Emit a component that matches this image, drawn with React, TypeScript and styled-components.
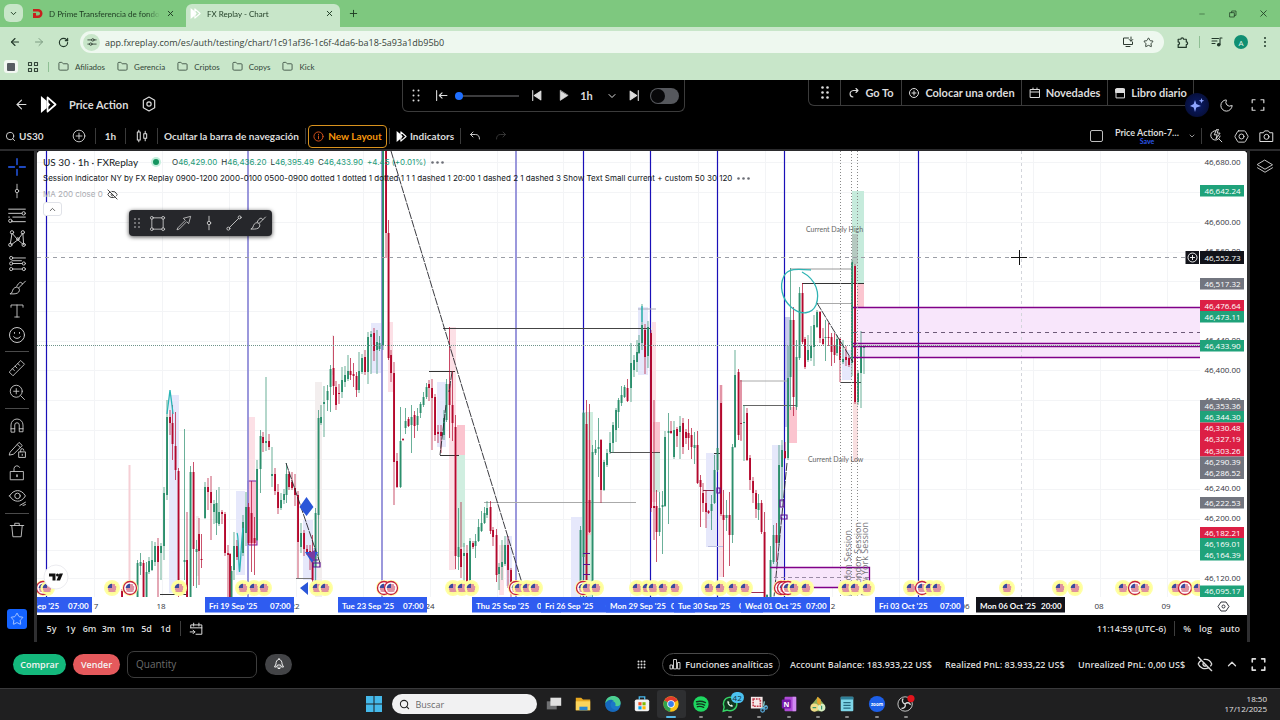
import React from "react";
import styled, { createGlobalStyle } from "styled-components";
import {
  ArrowLeft, ArrowRight, RotateCw, Search, Plus, X, Star, Moon, Folder,
  ChevronDown, ChevronUp, EyeOff, Minus,
} from "lucide-react";

const uiFont = `"Open Sans", "Noto Sans", sans-serif`;
const appFont = `Lato, "Open Sans", sans-serif`;
const legendFont = `Inter, "Open Sans", sans-serif`;

const GlobalStyle = createGlobalStyle`
  * { box-sizing: border-box; }
  body { margin: 0; background: #000; font-family: ${appFont}; }
  button { border: 0; background: none; padding: 0; margin: 0; color: inherit; font: inherit; cursor: pointer; }
  a { color: inherit; text-decoration: none; }
  svg { display: block; flex: none; }
`;

const Page = styled.div`
  display: flex;
  flex-direction: column;
  min-height: 100vh;
  color: #dcdcdc;
  font-size: 11px;
`;

/* ---------- browser ---------- */
const TabStrip = styled.div`
  display: flex;
  align-items: flex-end;
  height: 27px;
  background: #7ec87f;
  color: #1d3a22;
  font: 8px ${appFont};
`;
const TabMenu = styled.button`
  display: grid;
  place-items: center;
  width: 19px;
  height: 18px;
  margin: 0 5px 5px 4px;
  border-radius: 6px;
  background: #c8e6c9;
`;
const Tab = styled.div<{ $active?: boolean }>`
  display: flex;
  align-items: center;
  width: ${(p) => (p.$active ? 154 : 158)}px;
  height: 23px;
  padding: 0 ${(p) => (p.$active ? 6 : 11)}px 4px 4px;
  gap: 6px;
  border-radius: 6px 6px 0 0;
  background: ${(p) => (p.$active ? "#c8e6c9" : "transparent")};
`;
const TabTitle = styled.span`
  flex: 1;
  overflow: hidden;
  white-space: nowrap;
  mask-image: linear-gradient(90deg, #000 88%, transparent);
`;
const StripButton = styled.button`
  display: grid;
  place-items: center;
  width: 27px;
  height: 27px;
`;
const WindowControls = styled.div`
  display: flex;
  gap: 4px;
  margin-left: auto;
  padding-right: 3px;
`;
const BrowserBar = styled.div`
  display: flex;
  align-items: center;
  height: 29px;
  padding: 1px 3px 0 3px;
  background: #c8e6c9;
  color: #22382a;
`;
const BarButton = styled.button`
  display: grid;
  place-items: center;
  width: 24px;
  height: 22px;
`;
const BarDivider = styled.i`
  width: 1px;
  height: 12px;
  margin: 0 5px;
  background: #8fbf94;
`;
const Address = styled.label`
  display: flex;
  flex: 1;
  align-items: center;
  height: 22px;
  margin: 0 6px 0 5px;
  padding: 0 10px 0 3px;
  border-radius: 11px;
  background: #eef8ef;
  color: #2d3a30;
`;
const AddressInput = styled.input`
  flex: 1;
  margin: 0 4px 0 5px;
  padding: 0;
  border: 0;
  outline: 0;
  background: none;
  color: #37433a;
  font: 9px ${uiFont};
`;
const SiteChip = styled.span`
  display: grid;
  place-items: center;
  width: 17px;
  height: 17px;
  border-radius: 50%;
  background: #c8e6c9;
`;
const AddressIcon = styled.span`
  margin-left: 9px;
`;
const Avatar = styled.span`
  display: grid;
  place-items: center;
  width: 14px;
  height: 14px;
  margin: 0 5px;
  border-radius: 50%;
  background: #0f8f72;
  color: #e8f5e9;
  font: 8px ${uiFont};
`;
const Bookmarks = styled.nav`
  display: flex;
  align-items: center;
  height: 24px;
  padding: 0 4px 3px;
  gap: 9px;
  background: #c8e6c9;
  color: #34463a;
  font: 8px ${appFont};
`;
const Bookmark = styled.a`
  display: flex;
  align-items: center;
  gap: 6px;
  margin-right: 3px;
`;
const Pip = styled.i<{ $c: string; $h?: number }>`
  width: 1px;
  height: ${(p) => p.$h ?? 12}px;
  background: ${(p) => p.$c};
`;
const PinnedTile = styled.span`
  display: grid;
  place-items: center;
  width: 14px;
  height: 13px;
  border-radius: 3px;
  background: #f2f7f2;
`;

/* ---------- app header ---------- */
const Header = styled.header`
  display: flex;
  align-items: flex-start;
  height: 44px;
  padding-right: 10px;
`;
const HeaderLeft = styled.div`
  display: flex;
  align-items: center;
  width: 402px;
  height: 48px;
  padding-left: 14px;
`;
const BackButton = styled.button`
  width: 14px;
  margin-right: 12px;
`;
const HeaderTitle = styled.h1`
  width: 67px;
  margin: 0 5px 0 12px;
  font: 700 11px ${appFont};
  white-space: nowrap;
`;
const Dock = styled.div<{ $h: number }>`
  display: flex;
  align-items: center;
  height: ${(p) => p.$h}px;
  border: 1px solid #3b3b3b;
  border-top: 0;
  border-radius: 0 0 6px 6px;
`;
const DockCell = styled.button<{ $w: number; $line?: boolean }>`
  display: flex;
  align-items: center;
  justify-content: center;
  gap: 5px;
  width: ${(p) => p.$w}px;
  height: 100%;
  border-left: ${(p) => (p.$line ? "1px solid #3b3b3b" : "0")};
  font: 700 11px ${appFont};
  white-space: nowrap;
`;
const SpeedSlider = styled.input`
  appearance: none;
  width: 64px;
  height: 16px;
  margin: 0 4px 0 2px;
  background: linear-gradient(#3c3c3e, #3c3c3e) center / 100% 2px no-repeat;
  &::-webkit-slider-thumb {
    appearance: none;
    width: 8px;
    height: 8px;
    border-radius: 50%;
    background: #1f6fff;
  }
`;
const Switch = styled.input`
  appearance: none;
  position: relative;
  width: 29px;
  height: 16px;
  margin: 0 5px 0 11px;
  border-radius: 8px;
  background: #56585d;
  &::before {
    content: "";
    position: absolute;
    left: 1px;
    top: 1px;
    width: 14px;
    height: 14px;
    border-radius: 50%;
    background: #08080a;
  }
`;
const HeaderRight = styled.div`
  display: flex;
  margin-left: auto;
`;
const AssistantButton = styled.button`
  display: grid;
  place-items: center;
  width: 24px;
  height: 24px;
  margin: 13px 5px 0 -9px;
  border-radius: 50%;
  background: radial-gradient(#0a1c6a, #050a28);
`;
const HeaderIcon = styled.button`
  display: grid;
  place-items: center;
  width: 24px;
  height: 24px;
  margin-top: 13px;
  & + & { margin-left: 8px; }
`;

/* ---------- chart toolbar ---------- */
const Toolbar = styled.div`
  display: flex;
  align-items: center;
  height: 25px;
  padding-bottom: 1px;
  font: 700 10px ${appFont};
`;
const ToolCell = styled.button<{ $w: number; $dim?: boolean }>`
  display: flex;
  align-items: center;
  justify-content: center;
  gap: 3px;
  width: ${(p) => p.$w}px;
  height: 24px;
  color: ${(p) => (p.$dim ? "#3a3a3a" : "inherit")};
  white-space: nowrap;
`;
const SymbolCell = styled(ToolCell)`
  justify-content: flex-start;
  padding-left: 5px;
`;
const NewLayout = styled.button`
  display: flex;
  align-items: center;
  justify-content: center;
  gap: 4px;
  width: 79px;
  height: 23px;
  margin: 0 2px;
  border: 1px solid #d8921e;
  border-radius: 4px;
  color: #f5960c;
  white-space: nowrap;
`;
const ToolbarEnd = styled.div`
  display: flex;
  align-items: center;
  margin-left: auto;
  padding-right: 1px;
`;
const LayoutName = styled.button`
  display: flex;
  flex-direction: column;
  align-items: center;
  width: 66px;
  margin: 0 3px 0 11px;
  font-size: 9px;
  line-height: 10px;
  white-space: nowrap;
`;
const SaveText = styled.span`
  color: #2a55e8;
  font-size: 7px;
  line-height: 7px;
`;
const LayoutTick = styled.input`
  appearance: none;
  width: 13px;
  height: 12px;
  margin: 0;
  border: 1px solid #bdbdbd;
  border-radius: 2px;
`;

/* ---------- workspace ---------- */
const Workspace = styled.main`
  display: grid;
  grid-template-columns: 34px 3px minmax(0, 1fr) 3px 30px;
  flex: 1;
  border-top: 2px solid #2b2b2d;
`;
const Rail = styled.div`
  display: flex;
  flex-direction: column;
  align-items: center;
  padding-top: 4px;
  color: #c9c9c9;
`;
const RailButton = styled.button`
  display: grid;
  place-items: center;
  width: 24px;
  height: 24px;
`;
const RailLine = styled.i`
  width: 24px;
  height: 1px;
  margin: 4px 0;
  background: #4a4a4a;
`;
const FavouriteButton = styled.button`
  display: grid;
  place-items: center;
  width: 20px;
  height: 20px;
  margin: auto 0 13px;
  border-radius: 3px;
  background: #1463ff;
  color: #cfe0ff;
`;
const Stripe = styled.div`
  background: #2f2f31;
`;
const Center = styled.section`
  display: flex;
  flex-direction: column;
`;
const ChartPane = styled.div`
  position: relative;
  flex: 1;
  min-height: 200px;
  overflow: hidden;
  border-radius: 4px 4px 0 0;
  background: #fff;
`;
const Plot = styled.svg`
  position: absolute;
  inset: 0;
  width: 100%;
  height: 100%;
`;
const Legend = styled.div`
  position: absolute;
  left: 6px;
  top: 3px;
  color: #131722;
  font: 8px ${legendFont};
`;
const LegendRow = styled.div<{ $dim?: boolean }>`
  display: flex;
  align-items: center;
  gap: 4px;
  height: 16px;
  color: ${(p) => (p.$dim ? "#a9abb1" : "inherit")};
  white-space: nowrap;
`;
const SymbolName = styled.span`
  width: 101px;
  font: 10px ${appFont};
`;
const LiveDot = styled.i`
  width: 6px;
  height: 6px;
  margin: 0 9px 0 5px;
  border-radius: 50%;
  background: #14955f;
  box-shadow: 0 0 0 2px #c5efdd;
`;
const Quote = styled.span`
  color: #1d9a78;
  b { color: #26352f; font-weight: 400; }
`;
const MoreDots = styled.button`
  color: #6c6e76;
`;
const CollapseButton = styled.button`
  display: grid;
  place-items: center;
  width: 19px;
  height: 14px;
  border: 1px solid #e0e2e8;
  border-radius: 3px;
  background: #fff;
  color: #333;
`;
const DrawingBar = styled.div`
  position: absolute;
  left: 92px;
  top: 59px;
  display: flex;
  align-items: center;
  width: 143px;
  height: 26px;
  padding-left: 3px;
  border-radius: 4px;
  background: #26272b;
  box-shadow: 0 1px 4px rgba(0, 0, 0, 0.7);
  color: #cfcfcf;
`;
const DrawingButton = styled.button<{ $w: number }>`
  display: grid;
  place-items: center;
  width: ${(p) => p.$w}px;
  height: 24px;
`;
const ChartFooter = styled.div`
  display: flex;
  align-items: center;
  height: 27px;
  padding: 0 7px 0 8px;
  gap: 8px;
  font: 600 9px ${uiFont};
`;
const Ranges = styled.div`
  display: flex;
  gap: 6px;
`;
const RangeButton = styled.button`
  display: flex;
  justify-content: center;
  width: 13px;
`;
const Spacer = styled.span`
  flex: 1;
`;

/* ---------- trade bar ---------- */
const TradeBar = styled.footer`
  display: flex;
  align-items: center;
  height: 46px;
  padding: 0 15px 2px 13px;
  font: 600 9px ${uiFont};
`;
const TradeButton = styled.button<{ $c: string; $w: number }>`
  display: grid;
  place-items: center;
  width: ${(p) => p.$w}px;
  height: 21px;
  margin-right: 7px;
  border-radius: 11px;
  background: ${(p) => p.$c};
  color: #f4f4f4;
`;
const Quantity = styled.input`
  width: 130px;
  height: 27px;
  margin-right: 8px;
  padding: 0 8px;
  border: 1px solid #3d3d3d;
  border-radius: 7px;
  background: #000;
  color: #ddd;
  font: 10px ${uiFont};
  &::placeholder { color: #6c6c6c; }
`;
const Analytics = styled.button`
  display: flex;
  align-items: center;
  justify-content: center;
  gap: 4px;
  width: 118px;
  height: 23px;
  margin: 0 10px 0 16px;
  border: 1px solid #4a4a4a;
  border-radius: 12px;
  white-space: nowrap;
`;
const Stat = styled.span<{ $w: number }>`
  width: ${(p) => p.$w}px;
  white-space: nowrap;
`;
const TradeIcon = styled.button`
  display: grid;
  place-items: center;
  width: 27px;
  height: 24px;
  &:last-child { width: 14px; margin-left: 6px; }
`;

/* ---------- taskbar ---------- */
const Taskbar = styled.div`
  display: grid;
  grid-template-columns: 1fr auto 1fr;
  align-items: center;
  height: 32px;
  padding-bottom: 1px;
  border-top: 1px solid #39393b;
  background: #1f1f20;
  color: #e2e2e2;
`;
const TaskCenter = styled.div`
  display: flex;
  align-items: center;
  gap: 3px;
  grid-column: 2;
`;
const StartButton = styled.button`
  display: grid;
  place-items: center;
  width: 29px;
  height: 28px;
`;
const TaskSearch = styled.label`
  display: flex;
  align-items: center;
  gap: 6px;
  width: 145px;
  height: 20px;
  padding: 0 7px;
  border-radius: 10px;
  background: #f1f1f2;
  color: #222;
`;
const TaskInput = styled.input`
  width: 100px;
  padding: 0;
  border: 0;
  outline: 0;
  background: none;
  font: 9px ${uiFont};
  &::placeholder { color: #6a6a6a; }
`;
const TaskApps = styled.div`
  display: grid;
  grid-template-columns: repeat(13, 1fr);
  width: 381px;
`;
const TaskApp = styled.button<{ $on?: boolean; $run?: boolean }>`
  position: relative;
  display: grid;
  place-items: center;
  height: 28px;
  border-radius: 3px;
  background: ${(p) => (p.$on ? "#2e2f31" : "transparent")};
  &::after {
    content: "";
    position: absolute;
    bottom: 0;
    width: ${(p) => (p.$on ? 10 : 4)}px;
    height: 2px;
    border-radius: 1px;
    background: ${(p) => (p.$on ? "#58b8e8" : p.$run ? "#8a8a8a" : "transparent")};
  }
`;
const Count = styled.span`
  position: absolute;
  right: 1px;
  top: 2px;
  width: 13px;
  height: 11px;
  border-radius: 6px;
  background: #4cc2f0;
  color: #10303c;
  font: 8px/11px ${uiFont};
`;
const Clock = styled.time`
  padding-right: 13px;
  font: 8px/10px ${uiFont};
  text-align: right;
`;

/* ---------- icons ---------- */
const Ico = ({ s = 18, w = 1.2, children }: { s?: number; w?: number; children: React.ReactNode }) => (
  <svg width={s} height={s} viewBox="0 0 24 24" fill="none" stroke="currentColor" strokeWidth={w} strokeLinejoin="round" strokeLinecap="round" aria-hidden="true">
    {children}
  </svg>
);
const Grip = ({ cols, rows, gap, r }: { cols: number; rows: number; gap: number; r: number }) => (
  <svg width={cols * gap} height={rows * gap} fill="currentColor" aria-hidden="true">
    {Array.from({ length: cols * rows }, (_, i) => (
      <circle key={i} cx={(i % cols) * gap + gap / 2} cy={Math.floor(i / cols) * gap + gap / 2} r={r} />
    ))}
  </svg>
);
const Logo = ({ s = 18 }: { s?: number }) => (
  <svg width={s} height={s} viewBox="0 0 18 18" aria-hidden="true">
    <path d="M1 0v18l6-5v-8z" fill="#fff" />
    <path d="M8 1.500L16.500 9 8 16.500z" fill="none" stroke="#fff" strokeWidth="1.800" strokeLinejoin="round" />
    <path d="M7 5l4 4-4 4z" fill="#fff" />
  </svg>
);
const HexGear = ({ s = 16, w = 1.8 }) => (
  <Ico s={s} w={w}><path d="M12 1.500l8.500 4.800v11.400L12 22.500l-8.500-4.800V6.300z" /><circle cx="12" cy="12" r="3.200" /></Ico>
);
const WideGear = () => (
  <Ico s={15} w={1.5}><path d="M7.500 3h9a2 2 0 0 1 1.700 1l4 7a2 2 0 0 1 0 2l-4 7a2 2 0 0 1-1.700 1h-9a2 2 0 0 1-1.700-1l-4-7a2 2 0 0 1 0-2l4-7a2 2 0 0 1 1.700-1z" /><circle cx="12" cy="12" r="4" /></Ico>
);
const Corners = ({ s = 15, w = 2 }) => (
  <Ico s={s} w={w}><path d="M2 8V3h5M17 3h5v5M22 16v5h-5M7 21H2v-5" /></Ico>
);
const Brush = ({ s = 19 }) => (
  <Ico s={s}><path d="M3 20c3-1 2-4 4-6.500 2-2.300 5-2.500 6.500-.8 1.700 1.900 1 5-1.500 6.300C9.500 20.300 6 20.200 3 20zM13.500 12.500L22 4M11 10.500c1-2 3-5 5-5s1 2.500 2.500 2" /></Ico>
);
const VLineIcon = () => <Ico><path d="M12 3v6.500M12 14.500V21" /><circle cx="12" cy="12" r="2.300" /></Ico>;
const TrendIcon = () => <Ico><circle cx="4.500" cy="19.500" r="2" /><circle cx="19.500" cy="4.500" r="2" /><path d="M6 18L18 6" /></Ico>;

const railTools: [string, React.ReactNode][][] = [
  [
    ["Cursor", <Ico s={20} w={1.6}><path d="M12 2v7M12 15v7M2 12h7M15 12h7" stroke="#2962ff" /></Ico>],
    ["Vertical line", <VLineIcon />],
    ["Fib retracement", <Ico s={20}><path d="M2 5h20M2 10h16M7 14.500h15M5 20h17M2 14.500h1" /><circle cx="20" cy="10" r="2" /><circle cx="4" cy="19" r="2" /></Ico>],
    ["Patterns", <Ico s={20}><path d="M4 18L6 5l7 8 6-8 1 14-7-6-8 6" /><circle cx="4" cy="19" r="2" /><circle cx="6" cy="4" r="2" /><circle cx="19" cy="4" r="2" /><circle cx="20" cy="19" r="2" /><circle cx="13" cy="12" r="1.500" /></Ico>],
    ["Forecast", <Ico s={19}><path d="M6 5h16M6 12h12M6 19h12M5 8.500h12" /><circle cx="4" cy="5" r="2" /><circle cx="4" cy="12" r="2" /><circle cx="20" cy="12" r="2" /><circle cx="4" cy="19" r="2" /><circle cx="20" cy="19" r="2" /></Ico>],
    ["Brush", <Brush />],
    ["Text", <Ico><path d="M4 7V4h16v3M12 4v16M9 20h6" /></Ico>],
    ["Icons", <Ico s={20}><circle cx="12" cy="12" r="9" /><path d="M8 14c1 2.800 7 2.800 8 0M9 9v1M15 9v1" /></Ico>],
  ],
  [
    ["Measure", <Ico><path d="M2 17L17 2l5 5L7 22zM6 13l2.500 2.500M9.500 9.500L12 12M13 6l2.500 2.500" /></Ico>],
    ["Zoom in", <Ico><circle cx="11" cy="11" r="8" /><path d="M17 17l5 5M11 7.500v7M7.500 11h7" /></Ico>],
  ],
  [
    ["Magnet", <Ico><path d="M4 21v-9a8 8 0 0 1 16 0v9h-5v-9a3 3 0 0 0-6 0v9zM4 17h5M15 17h5" /></Ico>],
    ["Stay in drawing mode", <Ico s={19}><path d="M3 15L14 3l4 4L7 18l-5 1zM12 6l4 4M14 15h8v7h-8zM16 15v-2a2 2 0 0 1 4 0" /><path d="M18 18v1.500" /></Ico>],
    ["Lock drawings", <Ico><path d="M3.500 10h17v11h-17zM8 10V6a4 4 0 0 1 7.500-1.500" /><path d="M12 14.500v2" strokeWidth="2" /></Ico>],
    ["Hide drawings", <Ico s={19}><path d="M2 10c5-9 15-9 20 0-5 9-15 9-20 0z" /><circle cx="12" cy="10" r="3.500" /><path d="M15 22l7-4M19 22l3-1" /></Ico>],
  ],
  [["Remove objects", <Ico><path d="M3 6h18M5 6l1.500 15h11L19 6M9 6V3h6v3" /></Ico>]],
];

/* ---------- chart data: x, high, body top, body bottom, low, 1 = up ---------- */
type Candle = [number, number, number, number, number, 0 | 1];
const candles: Candle[] = [
  [122, 589, 591, 597, 597, 0], [137.5, 560, 563, 597, 597, 1], [140.500, 553, 562, 566, 575, 1], [143.500, 560, 563, 597, 597, 0],
  [146.500, 562, 572, 597, 597, 1], [149, 557, 561, 572, 574, 1], [152, 541, 560, 570, 571, 1], [155, 542, 546, 562, 566, 1],
  [158, 538, 546, 562, 597, 0], [161, 543, 546, 553, 580, 1], [164, 487, 493, 546, 560, 1], [167, 400, 417, 495, 500, 1],
  [170, 410, 417, 423, 435, 0], [172.500, 405, 423, 444, 460, 0], [175.500, 412, 446, 470, 480, 0], [178.500, 468, 471, 580, 597, 0],
  [184.500, 429, 560, 562, 580, 1], [187, 512, 560, 597, 597, 0], [190.500, 466, 472, 597, 597, 1], [193.500, 462, 472, 549, 586, 0],
  [196.500, 540, 549, 552, 588, 1], [199, 518, 534, 551, 585, 0], [201.500, 534, 559, 560, 568, 0], [205, 482, 487, 518, 519, 1],
  [208, 478, 487, 492, 510, 0], [211, 476, 492, 503, 540, 0], [214, 500, 504, 512, 524, 1], [216.500, 490, 503, 523, 535, 1],
  [219, 487, 512, 524, 526, 1], [222, 510, 512, 514, 524, 0], [225, 512, 514, 553, 556, 0], [228, 545, 553, 555, 597, 0],
  [230, 553, 554, 597, 597, 0], [231.500, 566, 571, 597, 597, 1], [234, 532, 546, 570, 580, 1], [237, 540, 546, 557, 560, 0],
  [243, 515, 522, 553, 556, 1], [246, 492, 507, 533, 546, 1], [248.500, 503, 507, 543, 545, 0], [251.500, 481, 513, 543, 572, 0],
  [254.500, 517, 538, 543, 575, 0], [257, 460, 469, 540, 541, 1], [260.500, 430, 436, 469, 493, 1], [263, 432, 437, 443, 452, 0],
  [266, 377, 441, 443, 451, 1], [269, 434, 441, 447, 450, 0], [272, 447, 474, 476, 487, 1], [275, 468, 474, 491, 495, 0],
  [278, 484, 492, 508, 514, 0], [281, 493, 500, 508, 510, 1], [284, 489, 494, 500, 504, 1], [286.500, 463, 474, 495, 503, 1],
  [289, 471, 474, 487, 490, 0], [292, 472, 482, 488, 490, 0], [295, 474, 488, 495, 506, 0], [298, 491, 495, 542, 578, 0],
  [301, 523, 533, 547, 553, 1], [304, 530, 533, 549, 556, 0], [307, 545, 549, 552, 555, 0], [310, 545, 551, 553, 570, 0],
  [312.500, 535, 552, 580, 590, 0], [315.500, 508, 513, 567, 590, 1], [318.500, 410, 418, 515, 560, 1], [321, 405, 417, 423, 425, 1],
  [324, 386, 402, 404, 437, 1], [327.500, 385, 391, 400, 411, 1], [330.500, 365, 369, 387, 412, 1], [333.500, 336, 368, 386, 395, 0],
  [336, 381, 387, 405, 410, 0], [339, 384, 393, 394, 404, 0], [342, 367, 380, 392, 398, 1], [345, 366, 375, 382, 387, 1],
  [348, 355, 371, 379, 381, 1], [350.500, 358, 371, 375, 380, 0], [353.500, 363, 374, 376, 387, 0], [356.500, 372, 376, 390, 397, 0],
  [359, 352, 371, 390, 393, 1], [362, 354, 358, 372, 374, 1], [365, 350, 357, 372, 375, 0], [368, 332, 337, 372, 384, 1],
  [371, 331, 334, 337, 374, 1], [374, 328, 333, 351, 361, 0], [377, 330, 342, 350, 374, 1], [379.500, 336, 343, 349, 351, 1],
  [383, 151, 151, 345, 350, 1], [386, 151, 151, 233, 258, 0], [388.500, 220, 233, 358, 360, 0], [391, 350, 355, 373, 382, 0],
  [394, 362, 373, 462, 505, 0], [397, 453, 461, 487, 488, 0], [400.500, 407, 441, 487, 488, 1], [403, 438, 439, 440, 441, 0],
  [405.500, 408, 421, 428, 434, 1], [408.500, 417, 419, 426, 427, 0], [411.500, 405, 417, 425, 453, 1], [414.500, 411, 415, 426, 438, 0],
  [417.500, 408, 416, 425, 431, 1], [420.500, 402, 404, 413, 418, 1], [423.500, 392, 397, 405, 407, 1], [426.500, 383, 387, 397, 399, 1],
  [429, 380, 384, 388, 401, 0], [432, 379, 388, 398, 450, 0], [435, 394, 397, 435, 441, 0], [438, 425, 432, 434, 443, 0],
  [441, 425, 432, 436, 453, 0], [444, 410, 418, 435, 440, 1], [446.500, 379, 384, 420, 422, 1], [449.500, 327, 384, 405, 438, 0],
  [452.500, 371, 405, 423, 441, 0], [455.500, 415, 427, 556, 569, 0], [458.500, 508, 547, 557, 570, 1], [461, 502, 549, 567, 578, 0],
  [464, 543, 553, 556, 590, 1], [467, 545, 553, 588, 590, 0], [470, 538, 541, 587, 590, 1], [473, 541, 543, 547, 549, 0],
  [475.500, 534, 541, 546, 558, 1], [478.500, 519, 527, 541, 542, 1], [481.500, 511, 523, 531, 532, 1], [484.500, 507, 513, 523, 524, 1],
  [487, 501, 508, 515, 518, 1], [490.500, 501, 507, 531, 534, 0], [493, 527, 530, 537, 546, 0], [496.500, 529, 535, 575, 582, 0],
  [499, 563, 567, 574, 590, 1], [502, 540, 562, 567, 580, 1], [505, 536, 545, 564, 566, 1], [508, 536, 545, 570, 588, 0],
  [511, 568, 570, 583, 597, 0], [580.500, 526, 530, 587, 597, 1], [583.500, 410, 413, 557, 597, 1], [586.500, 400, 424, 587, 597, 0],
  [589.500, 404, 500, 532, 533, 0], [592.500, 445, 452, 587, 597, 1], [595.500, 440, 449, 453, 455, 1], [598.500, 418, 447, 449, 477, 1],
  [601, 439, 440, 490, 503, 0], [604, 460, 462, 490, 491, 1], [607, 449, 453, 465, 467, 1], [610, 432, 443, 452, 454, 1],
  [613, 422, 425, 443, 453, 1], [616, 408, 410, 430, 442, 1], [618.500, 398, 400, 412, 428, 1], [621.500, 386, 395, 403, 406, 1],
  [624.500, 385, 387, 397, 398, 1], [627.500, 379, 388, 401, 402, 0], [631, 343, 363, 388, 402, 1], [634, 355, 360, 370, 377, 1],
  [637, 340, 352, 362, 372, 1], [639, 335, 343, 353, 354, 1], [642, 304, 325, 343, 350, 1], [645, 324, 330, 357, 374, 0],
  [648, 321, 327, 356, 368, 1], [651, 330, 333, 508, 512, 0], [654, 400, 506, 508, 540, 0], [656.500, 490, 506, 532, 562, 0],
  [659.500, 492, 508, 532, 536, 1], [662.500, 491, 505, 507, 554, 1], [665, 431, 437, 506, 507, 1], [668.500, 413, 431, 433, 524, 1],
  [671, 421, 431, 433, 434, 0], [674, 421, 430, 457, 459, 1], [677, 427, 429, 436, 447, 0], [680, 416, 426, 432, 459, 1],
  [683, 418, 423, 447, 454, 0], [686, 429, 432, 438, 444, 0], [688.500, 419, 433, 438, 450, 0], [691.500, 428, 435, 447, 459, 0],
  [694.500, 432, 445, 448, 464, 1], [697.500, 431, 445, 483, 484, 0], [700.500, 475, 480, 487, 527, 0], [703, 483, 493, 503, 512, 0],
  [706, 490, 503, 512, 528, 0], [708.500, 510, 511, 513, 514, 0], [711.500, 495, 504, 511, 530, 1], [714.500, 455, 470, 503, 504, 1],
  [717.500, 400, 448, 470, 472, 1], [721, 385, 403, 514, 516, 0], [723.500, 490, 515, 520, 577, 0], [726.500, 500, 515, 518, 531, 1],
  [729.500, 492, 515, 535, 566, 0], [732.500, 444, 447, 535, 543, 1], [735, 350, 375, 447, 448, 1], [738.500, 369, 372, 435, 440, 0],
  [741, 380, 423, 424, 441, 0], [744, 405, 422, 423, 461, 1], [747, 408, 413, 460, 461, 0], [750, 455, 458, 480, 490, 0],
  [753, 477, 481, 493, 503, 0], [756, 490, 493, 509, 518, 0], [758.500, 494, 503, 510, 520, 1], [761.500, 500, 503, 532, 534, 0],
  [764.500, 512, 532, 597, 597, 0], [767, 594, 595, 597, 597, 1], [770.500, 546, 560, 597, 597, 1], [773.500, 525, 535, 562, 564, 1],
  [776.500, 523, 535, 543, 562, 0], [779, 445, 465, 543, 545, 1], [782, 440, 450, 467, 502, 1], [785, 442, 451, 458, 459, 0],
  [788, 346, 378, 458, 460, 1], [790.500, 268, 320, 377, 410, 1], [793.500, 307, 320, 397, 416, 0], [796.500, 340, 357, 407, 410, 1],
  [799.500, 287, 293, 358, 360, 1], [802.500, 283, 293, 342, 344, 0], [805, 337, 339, 367, 369, 0], [808, 335, 350, 360, 362, 1],
  [811, 326, 346, 358, 361, 1], [814, 315, 325, 347, 366, 1], [817, 310, 312, 327, 328, 1], [820, 311, 312, 338, 343, 0],
  [823, 328, 339, 344, 345, 0], [825.500, 320, 337, 338, 361, 1], [828.500, 323, 337, 338, 346, 0], [831.500, 333, 337, 352, 366, 0],
  [834.500, 333, 346, 355, 363, 0], [837, 335, 339, 353, 356, 1], [840, 338, 339, 360, 382, 0], [843, 340, 359, 362, 364, 1],
  [846, 346, 357, 360, 366, 0], [849, 356, 358, 365, 367, 0], [852, 260, 262, 363, 376, 1], [855, 264, 266, 402, 404, 0],
  [858, 370, 373, 402, 405, 1], [861, 331, 347, 373, 408, 1], [864, 345, 346, 348, 374, 1],
];
const UP = "#2c8f6d";
const DOWN = "#b4082d";

/* x, y, width, height, fill */
type Zone = [number, number, number, number, string];
const LAV = "#e6e8fb", ROSE = "#fce0e6", MINT = "#d0eee0", PINK = "#fbc4cf", SAND = "#f3eeee";
const zones: Zone[] = [
  [169, 395, 10, 198, LAV], [128.500, 465, 2, 115, "#f6cfd5"], [236, 491, 9, 84, LAV], [248, 417, 7, 64, ROSE], [303, 520, 10, 60, LAV], [315, 382, 7, 215, SAND],
  [371, 323, 10, 50, LAV], [388, 322, 5, 70, ROSE], [449, 327, 7, 243, ROSE], [437, 382, 9, 65, LAV], [457, 425, 8, 30, PINK], [457, 455, 8, 92, MINT],
  [571, 517, 11, 80, LAV], [582, 412, 11, 185, MINT], [586, 440, 5, 95, PINK], [638, 307, 10, 68, LAV], [652, 322, 4, 180, ROSE],
  [653, 422, 7, 30, PINK], [653, 452, 7, 40, MINT], [706, 453, 10, 94, LAV], [719, 385, 4, 192, ROSE], [738, 380, 4, 60, ROSE],
  [772, 445, 11, 145, LAV], [784, 317, 6, 110, "#c9cdea"], [787, 407, 10, 36, PINK], [842, 350, 10, 30, LAV],
  [852, 191, 12, 92, "#c6ebdc"], [852, 234, 6, 30, "#b5c9c0"], [857, 283, 7, 31, "#fbc6d0"], [853, 402, 5, 60, "#f8dfe0"],
  [312, 548, 5, 40, "#d3d9f8"], [196, 516, 3, 60, SAND], [332, 335, 2, 40, SAND], [506, 536, 6, 50, LAV], [499, 545, 5, 50, ROSE],
];
/* x1, x2, y, colour */
const levels: [number, number, number, string][] = [
  [443, 651, 328.500, "#444"], [429, 455, 371.500, "#333"], [440, 459, 455.500, "#333"], [484, 636, 502.500, "#aaa"], [610, 660, 452.500, "#555"],
  [740, 787, 381, "#aaa"], [743, 796, 405.500, "#666"], [790, 853, 269, "#999"], [802, 864, 283.500, "#333"], [817, 852, 303.500, "#aaa"],
  [840, 861, 382.500, "#444"], [160, 187, 594.500, "#333"], [708, 723, 546.500, "#b9bde0"], [703, 714, 490.500, "#803050"], [638, 656, 309, "#aab"],
  [296, 313, 578.500, "#777"], [750, 765, 592.500, "#a03050"], [714, 720, 453.500, "#333"],
];
const gridX = [94, 162, 229, 296, 363, 430, 497, 563, 630, 698, 765, 832, 899, 966, 1033, 1100, 1167];
const gridY = [162, 192, 222, 252, 281, 311, 341, 370, 400, 430, 459, 489, 519, 550, 578];
const dayLines: [number, boolean][] = [[46.5, true], [248, false], [382, false], [516, false], [583.5, true], [650.5, true], [717.5, true], [784.5, true], [918.5, true]];
/* x of every calendar event, true when it carries a red importance ring */
const events: [number, boolean][] = [
  [43, true], [47, false], [112, false], [130, true], [179, false], [243, false], [254, false], [264, false], [317, false], [325, false],
  [384, true], [391, true], [453, false], [462, false], [471, false], [516, true], [519, false], [527, false], [535, false],
  [583, true], [587, false], [596, false], [637, false], [647, false], [653, false], [663, false], [675, false], [709, false], [720, false], [733, false], [745, false],
  [781, true], [784, true], [788, true], [794, false], [806, false], [846, false], [855, false], [867, false],
  [911, false], [922, true], [930, false], [937, false], [1007, false], [1060, false], [1075, false], [1123, false], [1135, true], [1145, false],
  [1176, false], [1185, true], [1198, false],
];
const prices: [string, number][] = [
  ["46,680.00", 162], ["46,600.00", 222], ["46,560.00", 251], ["46,440.00", 340], ["46,400.00", 370], ["46,360.00", 400], ["46,240.00", 488], ["46,200.00", 518], ["46,120.00", 578],
];
const G = "#1fa27a", R = "#dc1f45", N = "#72757f";
const tags: [string, number, string][] = [
  ["46,642.24", 190.5, G], ["46,517.32", 283.5, N], ["46,476.64", 305.5, R], ["46,473.11", 316.5, G], ["46,433.90", 345.5, G],
  ["46,353.36", 405.5, N], ["46,344.30", 416.5, G], ["46,330.48", 428, R], ["46,327.19", 439, R], ["46,303.26", 450.5, R], ["46,290.39", 462, N], ["46,286.52", 473, N],
  ["46,222.53", 502.5, N], ["46,182.21", 532.5, R], ["46,169.01", 543.5, G], ["46,164.39", 554.5, G], ["46,095.17", 591, G],
];
const days: [string, number][] = [["7", 96], ["18", 161], ["22", 295], ["24", 430], ["2", 833], ["06", 965], ["08", 1099], ["09", 1166]];
const BLUE = "#2f5cf0", INK = "#12131a";
/* date, hour, left edge, fill */
const dateTags: [string, string, number, string][] = [
  ["Tue 16 Sep '25", "07:00", 3, BLUE], ["Fri 19 Sep '25", "07:00", 205, BLUE], ["Tue 23 Sep '25", "07:00", 338, BLUE], ["Thu 25 Sep '25", "07:00", 472, BLUE],
  ["Fri 26 Sep '25", "07:00", 541, BLUE], ["Mon 29 Sep '25", "07:00", 606, BLUE], ["Tue 30 Sep '25", "07:00", 674, BLUE], ["Wed 01 Oct '25", "07:00", 741, BLUE],
  ["Fri 03 Oct '25", "07:00", 875, BLUE], ["Mon 06 Oct '25", "20:00", 976, INK],
];

const EventMark = ({ x, ring }: { x: number; ring: boolean }) => (
  <g transform={`translate(${x} 588)`}>
    <circle r="6.500" fill={ring ? "#fff" : "#ffff96"} stroke={ring ? "#c8203c" : "none"} strokeWidth="1.300" />
    <circle r="4.300" fill="#f3d5dc" />
    <path d="M0-3h3M0-1h4.200M-4 1H4M-3.500 3h7" stroke="#c5405a" strokeWidth="0.900" />
    <path d="M-4.300 0A4.300 4.300 0 0 1 0-4.300V0z" fill="#3b4a9c" />
  </g>
);

const Chart = () => (
  <Plot viewBox="37 151 1210 464" preserveAspectRatio="xMidYMid slice" fontFamily={uiFont} role="img" aria-label="US 30 one hour chart">
    <defs><clipPath id="plot"><rect x="37" y="151" width="1163" height="446" /></clipPath></defs>
    <rect x="37" y="151" width="1210" height="464" fill="#fff" />
    <g clipPath="url(#plot)">
      <g stroke="#f3f4f6">
        {gridX.map((x) => <path key={x} d={`M${x + 0.5} 151V597`} />)}
        {gridY.map((y) => <path key={y} d={`M37 ${y + 0.5}H1200`} />)}
      </g>
      {zones.map(([x, y, w, h, c], i) => <rect key={i} x={x} y={y} width={w} height={h} fill={c} />)}
      <g fill="#f8e6fb">
        <rect x="853" y="307" width="347" height="36" />
        <rect x="853" y="346" width="347" height="11" />
        <rect x="773" y="567" width="96" height="20" />
      </g>
      <rect x="248" y="481" width="9" height="64" fill="#fbc0d4" stroke="#7b1fa2" />
      <path d="M1021.500 151V597" stroke="#d3d5db" strokeDasharray="3 3" />
      {dayLines.map(([x, dark]) => <path key={x} d={`M${x} 151V597`} stroke={dark ? "#1a10b8" : "#8a86d6"} strokeWidth={dark ? 1.2 : 1.7} />)}
      {levels.map(([a, b, y, c], i) => <path key={i} d={`M${a} ${y}H${b}`} stroke={c} />)}
      {candles.map(([x, h, t, b, l, up], i) => (
        <g key={i} fill={up ? UP : DOWN}>
          <rect x={x - 0.5} y={h} width="1" height={l - h} fillOpacity="0.700" />
          <rect x={x - 0.9} y={t} width="1.900" height={Math.max(b - t, 1)} />
        </g>
      ))}
      <g fill="none" stroke="#26262c" strokeDasharray="8 1" strokeWidth="0.900">
        <path d="M391 151L463 390L522 583M286 463L320 563M817 303L853 362M446 405L440 455M452 372L449 392" />
        <path d="M787 463L774 597" />
      </g>
      <path d="M853 332.500H1200" stroke="#6d5a78" strokeDasharray="4 4" />
      <path d="M774 577.500H869" stroke="#9a8aa5" strokeDasharray="4 3" />
      <path d="M853 307.500H1200M853 343.500H1200M853 346.500H1200M853 357.500H1200M770 567.500H869.500V587.500H790" fill="none" stroke="#800088" strokeWidth="1.300" />
      <path d="M583 553.500h7M583 564.500h7M583 574.500h7M313 563h7v4h-7zM313 560h5M717 488h3v5h-3zM780 500h4v7h-4zM781 515h6v4h-6z" fill="none" stroke="#5a1090" strokeWidth="1.200" />
      <path d="M37 257.500H1196" stroke="#9b9ea6" strokeDasharray="4 4" />
      <path d="M37 345.500H1200" stroke="#6e938a" strokeDasharray="1 1" />
      <path d="M840.500 151V597M851.500 151V597M857.500 151V597" stroke="#8a8a8a" strokeDasharray="1 2" />
      <path d="M811 270C798 269 788 268 784 276C779 286 782 299 791 307C801 316 812 314 816 305C820 294 817 280 802 272" fill="none" stroke="#2fb4b4" strokeWidth="1.300" />
      <path d="M167 414C168 406 169 398 170 390C171 398 172 404 173 414M237 533C239 536 238 560 239.500 572C241 560 241 545 243 528M642 306V322" fill="none" stroke="#28b5b5" strokeWidth="1.300" />
      <path d="M306.500 497l7 10-7 9-7-9zM305 552h13l-6 11zM300 588l8-6v13z" fill="#2a56d8" />
      <path d="M307 554l8-4v12z" fill="#7a3aa0" />
      <g fontSize="7" fill="#666" fontFamily={appFont}>
        <text x="806" y="232">Current Daily High</text>
        <text x="808" y="462">Current Daily Low</text>
      </g>
      <g fontSize="9" fill="#77777c" textAnchor="end">
        <text transform="translate(851 530) rotate(-90)">London Session</text>
        <text transform="translate(861 522) rotate(-90)">London Session</text>
        <text transform="translate(868 522) rotate(-90)">New York Session</text>
      </g>
      {events.map(([x], i) => <circle key={i} cx={x} cy="588" r="8" fill="#ffffa6" />)}
      {events.map(([x, ring], i) => <EventMark key={i} x={x} ring={ring} />)}
      <circle cx="56" cy="577" r="12" fill="#fff" stroke="#ececf0" />
      <path d="M49 573.500h6.500v7H52.500v-4H49zM59.500 573.500H63l-3 7h-3.500z" fill="#111" />
      <circle cx="57.500" cy="575" r="1.500" fill="#111" />
      <path d="M1011 257.500h16M1019.500 250v15" stroke="#111" />
    </g>
    <g fontSize="8" fill="#32343c" textAnchor="middle">
      {prices.map(([t, y]) => <text key={t} x="1222.500" y={y + 3}>{t}</text>)}
      {tags.map(([t, y, c]) => (
        <g key={t}><rect x="1200" y={y - 5.5} width="44" height="11.500" fill={c} /><text x="1222.500" y={y + 3} fill="#fff">{t}</text></g>
      ))}
      <rect x="1200" y="251" width="44" height="13" fill={INK} />
      <text x="1222.500" y="261" fill="#fff">46,552.73</text>
      {days.map(([t, x]) => <text key={t} x={x} y="609">{t}</text>)}
    </g>
    <rect x="1185.500" y="251" width="13.500" height="13" fill={INK} />
    <path d="M1188 257.500a4.500 4.500 0 1 0 9 0a4.500 4.500 0 1 0-9 0M1192.500 255v5M1190 257.500h5" fill="none" stroke="#fff" strokeWidth="0.900" />
    <g fontSize="8" fontWeight="700" fontFamily={appFont} fill="#fff">
      {dateTags.map(([date, hour, x, c]) => (
        <g key={date}>
          <rect x={x} y="597" width="89" height="15.500" fill={c} />
          <text x={x + 4} y="609">{date}</text>
          <text x={x + 65} y="609">{hour}</text>
        </g>
      ))}
    </g>
    <g fill="none" stroke="#33353d"><path d="M1221 602h5l3 4.500-3 4.500h-5l-3-4.500z" /><circle cx="1223.500" cy="606.500" r="1.500" /></g>
  </Plot>
);

/* ---------- taskbar artwork, 20 x 20 each ---------- */
const art: { name: string; run?: boolean; on?: boolean; el: React.ReactNode; badge?: string }[] = [
  { name: "Task view", el: <><rect x="2" y="7" width="11" height="9" fill="#6f7072" /><rect x="6" y="3" width="12" height="9" fill="#e0e0e0" /></> },
  { name: "Explorer", el: <><path d="M2 3h6l2 2h8v12H2z" fill="#e8a820" /><path d="M2 7h16v10H2z" fill="#fbd45c" /><path d="M6 13h9v4H6z" fill="#2b86d0" /></> },
  { name: "Edge", el: <><circle cx="10" cy="10" r="8.500" fill="#1b78c8" /><path d="M1.500 9C2-1 18-2 18.500 9c0 4-5 4-6 3 2-5-4-7-11-3z" fill="#4ccf90" /><path d="M1.500 10C3 5 9 4 11 7c-5 0-5 7 0 9 2 .8 4 .5 5.500-.5C12 21 1 19 1.500 10z" fill="#1668bd" /></> },
  { name: "Store", el: <><path d="M7 5V2h6v3" fill="none" stroke="#48b8ec" strokeWidth="1.500" /><rect x="2" y="5" width="16" height="13" rx="2" fill="#f2f2f2" /><path d="M6 8h3.500v3.500H6z" fill="#f25022" /><path d="M10.500 8H14v3.500h-3.500z" fill="#7fba00" /><path d="M6 12.500h3.500V16H6z" fill="#00a4ef" /><path d="M10.500 12.500H14V16h-3.500z" fill="#ffb900" /></> },
  { name: "Chrome", on: true, el: <><circle cx="10" cy="10" r="8.500" fill="#fbc116" /><path d="M10 10L2.600 6a8.500 8.500 0 0 1 14.800 0z" fill="#e33b2e" /><path d="M10 10L2.600 6a8.500 8.500 0 0 0 6.400 12.500z" fill="#31a350" /><circle cx="10" cy="10" r="4.200" fill="#fff" /><circle cx="10" cy="10" r="3.200" fill="#3b7ded" /></> },
  { name: "Spotify", run: true, el: <><circle cx="10" cy="10" r="8.500" fill="#1ed760" /><path d="M5 7.500q5-1.500 10 1M5.500 10.300q4-1.200 8.500 1M6 13q3.500-1 7 .7" fill="none" stroke="#10351c" strokeWidth="1.500" strokeLinecap="round" /></> },
  { name: "WhatsApp", run: true, badge: "42", el: <><path d="M2.500 18l1-4.500a7.500 7.500 0 1 1 3.500 3.300z" fill="#12391f" stroke="#37d366" strokeWidth="1.600" /><path d="M7.500 6.500c-2 3 3 8 6 6l-1.500-2-1.500 1-2-2.500 1-1z" fill="#e9fbee" /></> },
  { name: "Snipping tool", run: true, el: <><rect x="1" y="2" width="13" height="13" fill="#f5e9e9" /><path d="M3.500 4.500h8v8h-8z" fill="none" stroke="#c23a4a" strokeWidth="1.800" strokeDasharray="2 1" /><path d="M16 7l-1 5M12 15l7-3" stroke="#8cc" strokeWidth="1.500" /><circle cx="14" cy="17" r="2" fill="none" stroke="#57a8d8" strokeWidth="1.400" /><circle cx="17.500" cy="14" r="1.800" fill="none" stroke="#57a8d8" strokeWidth="1.400" /></> },
  { name: "OneNote", run: true, el: <><rect x="5" y="2" width="13" height="16" rx="1" fill="#ae4bd5" /><path d="M14 2h4v16h-4z" fill="#d08af0" /><rect x="2" y="5" width="10" height="10" rx="1" fill="#7719aa" /><text x="4" y="13" fontSize="8" fontWeight="700" fill="#fff">N</text></> },
  { name: "MetaTrader", run: true, el: <><path d="M2 12l8-10 8 10-3 6H5z" fill="#8fae5a" /><circle cx="6" cy="14" r="4.500" fill="#f0dc8a" /><circle cx="14" cy="14" r="4.200" fill="#d8efc4" /><path d="M9 2l4 3v7l-4-3z" fill="#e9a42c" /><path d="M4 14h4M14 12v4" stroke="#3a9a70" strokeWidth="1.300" /></> },
  { name: "Notepad", run: true, el: <><rect x="3" y="2" width="14" height="16" rx="1" fill="#7fd6e8" /><path d="M3 2h14v3H3z" fill="#2f7f98" /><path d="M6 8.500h8M6 11.500h8M6 14.500h8" stroke="#256a80" strokeWidth="1.300" /></> },
  { name: "Zoom", run: true, el: <><circle cx="10" cy="10" r="9" fill="#1d5fe8" /><text x="10" y="12" fontSize="5" fontWeight="700" textAnchor="middle" fill="#fff">zoom</text></> },
  { name: "OBS", run: true, el: <><circle cx="9" cy="10" r="8" fill="#151515" stroke="#d8d8d8" /><path d="M9 10C6 9 5 6 7 4M9 10c2-2 5-2 6 1M9 10c1 3-1 5-4 5" fill="none" stroke="#d8d8d8" strokeWidth="1.500" /><circle cx="15.500" cy="4" r="4" fill="#e3141c" /></> },
];

const Browser = () => (
  <>
    <TabStrip>
      <TabMenu aria-label="Search tabs"><ChevronDown size={9} strokeWidth={2.5} /></TabMenu>
      <Tab>
        <svg width="11" height="11" viewBox="0 0 11 11"><path d="M1 1h5a4.500 4.500 0 0 1 0 9H1V5h3v2.500h2a2 2 0 0 0 0-4H1z" fill="#c8201e" /></svg>
        <TabTitle>D Prime Transferencia de fondo</TabTitle>
        <X size={9} strokeWidth={2.5} />
      </Tab>
      <Tab $active>
        <Logo s={11} />
        <TabTitle>FX Replay - Chart</TabTitle>
        <X size={9} strokeWidth={2.5} />
      </Tab>
      <StripButton aria-label="New tab"><Plus size={11} strokeWidth={2} /></StripButton>
      <WindowControls>
        <StripButton aria-label="Minimize"><Minus size={8} strokeWidth={1.5} /></StripButton>
        <StripButton aria-label="Restore"><Ico s={8} w={2.2}><path d="M3 8h13v13H3zM8 8V3h13v13h-5" /></Ico></StripButton>
        <StripButton aria-label="Close"><X size={11} strokeWidth={1.8} /></StripButton>
      </WindowControls>
    </TabStrip>
    <BrowserBar>
      <BarButton aria-label="Back"><ArrowLeft size={12} strokeWidth={2.2} /></BarButton>
      <BarButton aria-label="Forward" disabled><ArrowRight size={12} strokeWidth={2} color="#7d9c82" /></BarButton>
      <BarButton aria-label="Reload"><RotateCw size={11} strokeWidth={2.5} /></BarButton>
      <Address>
        <SiteChip><Ico s={10} w={2}><path d="M2 7h9M17 7h5M2 17h4M13 17h9" /><circle cx="14" cy="7" r="3" /><circle cx="9" cy="17" r="3" /></Ico></SiteChip>
        <AddressInput aria-label="Address" defaultValue="app.fxreplay.com/es/auth/testing/chart/1c91af36-1c6f-4da6-ba18-5a93a1db95b0" />
        <AddressIcon><Ico s={12} w={2}><path d="M13 4H3v13h18v-5M8 21h8M18 2v8M14.500 7l3.500 3.500L21.500 7" /></Ico></AddressIcon>
        <AddressIcon><Star size={11} strokeWidth={2} /></AddressIcon>
      </Address>
      <BarButton aria-label="Extensions"><Ico s={13} w={2.2}><path d="M4 6h5a2.500 2.500 0 0 1 5 0h5v5a2.500 2.500 0 0 1 0 5v5H4v-5a2.500 2.500 0 0 0 0-5z" /></Ico></BarButton>
      <BarDivider />
      <BarButton aria-label="Media"><Ico s={12} w={2.2}><path d="M2 5h13M2 10h10M2 15h6M18 17V4h4" /><circle cx="15.500" cy="17.500" r="2.500" fill="currentColor" /></Ico></BarButton>
      <Avatar>A</Avatar>
      <BarButton aria-label="Menu"><Grip cols={1} rows={3} gap={4} r={1} /></BarButton>
    </BrowserBar>
    <Bookmarks>
      <PinnedTile><svg width="8" height="8"><rect width="8" height="8" rx="1" fill="#575c62" /></svg></PinnedTile>
      <Ico s={12} w={2.2}><path d="M3 3h6v6H3zM15 3h6v6h-6zM3 15h6v6H3zM15 15h6v6h-6z" /></Ico>
      <Pip $c="#8fbf94" $h={10} />
      {["Afiliados", "Gerencia", "Criptos", "Copys", "Kick"].map((b) => (
        <Bookmark key={b} href="#"><Folder size={11} strokeWidth={1.8} />{b}</Bookmark>
      ))}
    </Bookmarks>
  </>
);

const Prev = <Ico s={13}><path d="M5 3v18M20 4v16L8 12z" fill="currentColor" strokeWidth="2" /></Ico>;
const Play = <Ico s={13}><path d="M6 3v18l14-9z" fill="currentColor" /></Ico>;
const Next = <Ico s={13}><path d="M19 3v18M4 4v16l12-8z" fill="currentColor" strokeWidth="2" /></Ico>;
const ToolLine = () => <Pip $c="#3a3a3a" $h={16} />;

export default function App() {
  return (
    <Page>
      <GlobalStyle />
      <Browser />
      <Header>
        <HeaderLeft>
          <BackButton aria-label="Back"><ArrowLeft size={15} strokeWidth={1.8} /></BackButton>
          <Logo s={17} />
          <HeaderTitle>Price Action</HeaderTitle>
          <HexGear s={16} />
        </HeaderLeft>
        <Dock $h={32}>
          <DockCell $w={26} aria-label="Move"><Grip cols={2} rows={3} gap={5} r={1} /></DockCell>
          <DockCell $w={24} aria-label="Go to start"><Ico s={13} w={2}><path d="M3 3v18M22 12H8M13 7l-5 5 5 5" /></Ico></DockCell>
          <SpeedSlider type="range" min={0} max={10} defaultValue={0} aria-label="Speed" />
          <DockCell $w={26} aria-label="Previous">{Prev}</DockCell>
          <DockCell $w={29} aria-label="Play">{Play}</DockCell>
          <DockCell $w={17}>1h</DockCell>
          <DockCell $w={34} aria-label="Interval"><ChevronDown size={12} strokeWidth={2} /></DockCell>
          <DockCell $w={10} aria-label="Next">{Next}</DockCell>
          <Switch type="checkbox" role="switch" aria-label="Auto replay" />
        </Dock>
        <HeaderRight>
          <Dock $h={26}>
            <DockCell $w={31} aria-label="Move"><Grip cols={2} rows={3} gap={5} r={1.3} /></DockCell>
            <DockCell $w={61} $line><Ico s={12} w={2.2}><path d="M10 20C2 19 2 8 11 7h9M16 3l4 4-4 4" /></Ico>Go To</DockCell>
            <DockCell $w={120} $line><Ico s={12} w={2}><circle cx="12" cy="12" r="9" /><path d="M12 8v8M8 12h8" /></Ico>Colocar una orden</DockCell>
            <DockCell $w={86} $line><Ico s={12} w={2}><path d="M3 5h18v16H3zM3 10h18M8 2v3M16 2v3" /></Ico>Novedades</DockCell>
            <DockCell $w={86} $line><Ico s={12} w={2}><path d="M4 21V5a2 2 0 0 1 2-2h13a2 2 0 0 1 2 2v16z" /><path d="M4 4h17v7H4z" fill="currentColor" /></Ico>Libro diario</DockCell>
          </Dock>
          <AssistantButton aria-label="Assistant">
            <svg width="16" height="16" viewBox="0 0 16 16"><path d="M6 3l1.300 4L12 9l-4.700 1.500L6 15l-1.300-4.500L1 9l3.700-2zM12.500 1l.7 2 2 .8-2 .7-.7 2-.7-2-2-.7 2-.8z" fill="#8fa6ff" /></svg>
          </AssistantButton>
          <HeaderIcon aria-label="Dark mode"><Moon size={15} strokeWidth={1.6} /></HeaderIcon>
          <HeaderIcon aria-label="Full screen"><Corners s={14} w={2} /></HeaderIcon>
        </HeaderRight>
      </Header>
      <Toolbar>
        <SymbolCell $w={63}><Search size={11} strokeWidth={2} />US30</SymbolCell>
        <ToolCell $w={32} aria-label="Compare"><Ico s={14} w={1.5}><circle cx="12" cy="12" r="10" /><path d="M12 7v10M7 12h10" /></Ico></ToolCell>
        <ToolLine />
        <ToolCell $w={29}>1h</ToolCell>
        <ToolLine />
        <ToolCell $w={31} aria-label="Chart type"><Ico s={14} w={1.8}><path d="M4 5h5v14H4zM6.500 2v3M6.500 19v3M15 8h5v8h-5zM17.500 4v4M17.500 16v4" /></Ico></ToolCell>
        <ToolLine />
        <ToolCell $w={147}>Ocultar la barra de navegación</ToolCell>
        <ToolLine />
        <NewLayout><Ico s={11} w={2}><g stroke="#e0561c"><circle cx="12" cy="12" r="10" /><path d="M12 7v1M12 11v6" /></g></Ico>New Layout</NewLayout>
        <ToolLine />
        <ToolCell $w={70}><Logo s={11} />Indicators</ToolCell>
        <ToolLine />
        <ToolCell $w={28} aria-label="Undo"><Ico s={12} w={1.8}><path d="M8 4L3 9l5 5M3 9h10c5 0 8 3 8 9" /></Ico></ToolCell>
        <ToolCell $w={23} $dim aria-label="Redo"><Ico s={12} w={1.8}><path d="M16 4l5 5-5 5M21 9H11c-5 0-8 3-8 9" /></Ico></ToolCell>
        <ToolbarEnd>
          <LayoutTick type="checkbox" aria-label="Layout" />
          <LayoutName>Price Action-7…<SaveText>Save</SaveText></LayoutName>
          <ToolCell $w={18} aria-label="Layouts"><ChevronDown size={8} strokeWidth={2} /></ToolCell>
          <ToolLine />
          <ToolCell $w={27} aria-label="Quick search"><Ico s={14} w={1.7}><path d="M12 3a8 8 0 1 0 7 9M17 17l5 5M13 1l-4 9h5l-2 7 7-10h-5l2-6z" /></Ico></ToolCell>
          <ToolCell $w={25} aria-label="Settings"><WideGear /></ToolCell>
          <ToolCell $w={25} aria-label="Snapshot"><Ico s={15} w={1.6}><path d="M2 6h5l2-3h6l2 3h5v14H2z" /><circle cx="12" cy="12.500" r="4" /></Ico></ToolCell>
        </ToolbarEnd>
      </Toolbar>
      <Workspace>
        <Rail>
          {railTools.map((group, g) => (
            <React.Fragment key={g}>
              {g > 0 && <RailLine />}
              {group.map(([name, icon]) => <RailButton key={name} aria-label={name}>{icon}</RailButton>)}
            </React.Fragment>
          ))}
          <FavouriteButton aria-label="Favourites"><Star size={14} strokeWidth={1.3} /></FavouriteButton>
        </Rail>
        <Stripe />
        <Center>
          <ChartPane>
            <Chart />
            <Legend>
              <LegendRow>
                <SymbolName>US 30 · 1h · FXReplay</SymbolName>
                <LiveDot />
                <Quote><b>O</b>46,429.00</Quote><Quote><b>H</b>46,436.20</Quote><Quote><b>L</b>46,395.49</Quote><Quote><b>C</b>46,433.90</Quote><Quote>+4.45 (+0.01%)</Quote>
                <MoreDots aria-label="More"><Grip cols={3} rows={1} gap={5} r={1.3} /></MoreDots>
              </LegendRow>
              <LegendRow>
                Session Indicator NY by FX Replay 0900-1200 2000-0100 0500-0900 dotted 1 dotted 1 dotted 1 1 1 dashed 1 20:00 1 dashed 2 1 dashed 3 Show Text Small current + custom 50 30 120
                <MoreDots aria-label="More"><Grip cols={3} rows={1} gap={5} r={1.3} /></MoreDots>
              </LegendRow>
              <LegendRow $dim>MA 200 close 0 <EyeOff size={11} strokeWidth={2} color="#333" /></LegendRow>
              <CollapseButton aria-label="Collapse legend"><ChevronUp size={9} /></CollapseButton>
            </Legend>
            <DrawingBar>
              <DrawingButton $w={10} aria-label="Move"><Grip cols={2} rows={3} gap={4} r={0.8} /></DrawingButton>
              <DrawingButton $w={31} aria-label="Rectangle"><Ico s={17}><path d="M4 6v12M20 6v12M6 4h12M6 20h12" /><circle cx="4" cy="4" r="2" /><circle cx="20" cy="4" r="2" /><circle cx="4" cy="20" r="2" /><circle cx="20" cy="20" r="2" /></Ico></DrawingButton>
              <DrawingButton $w={21} aria-label="Arrow"><Ico s={16}><path d="M3 19L14 8l-3-3 11-3-3 11-3-3L5 21l-3 1z" /></Ico></DrawingButton>
              <DrawingButton $w={29} aria-label="Vertical line"><VLineIcon /></DrawingButton>
              <DrawingButton $w={21} aria-label="Trend line"><TrendIcon /></DrawingButton>
              <DrawingButton $w={28} aria-label="Brush"><Brush s={18} /></DrawingButton>
            </DrawingBar>
          </ChartPane>
          <ChartFooter>
            <Ranges>{["5y", "1y", "6m", "3m", "1m", "5d", "1d"].map((r) => <RangeButton key={r}>{r}</RangeButton>)}</Ranges>
            <Pip $c="#3d3d3d" $h={15} />
            <button aria-label="Go to date"><Ico s={14} w={1.7}><path d="M3 10V5h19v16H12M3 10h19M8 2v5M17 2v5M2 17h8M7 14l3 3-3 3" /></Ico></button>
            <Spacer />
            <button>11:14:59 (UTC-6)</button>
            <Pip $c="#3d3d3d" $h={15} />
            <button>%</button><button>log</button><button>auto</button>
          </ChartFooter>
        </Center>
        <Stripe />
        <Rail>
          <RailButton aria-label="Object tree"><Ico s={18} w={1.3}><path d="M12 3l10 6-10 6L2 9zM2 13l10 6 10-6" /></Ico></RailButton>
        </Rail>
      </Workspace>
      <TradeBar>
        <TradeButton $c="#14b87c" $w={53}>Comprar</TradeButton>
        <TradeButton $c="#e5595c" $w={47}>Vender</TradeButton>
        <Quantity placeholder="Quantity" aria-label="Quantity" />
        <TradeButton $c="#434447" $w={27} aria-label="Alerts"><Ico s={12} w={2}><path d="M12 2c-5 2-6 6-6 10l-3 6h4l2-4h6l2 4h4l-3-6c0-4-1-8-6-10zM10 18v3h4v-3" /></Ico></TradeButton>
        <Spacer />
        <Grip cols={3} rows={3} gap={3} r={1} />
        <Analytics><Ico s={12} w={1.8}><path d="M2 21V14h5v7zM9 21V3h6v18zM17 21V9h5v12z" /></Ico>Funciones analíticas</Analytics>
        <Stat $w={155}>Account Balance: 183.933,22 US$</Stat>
        <Stat $w={133}>Realized PnL: 83.933,22 US$</Stat>
        <Stat $w={113}>Unrealized PnL: 0,00 US$</Stat>
        <TradeIcon aria-label="Hide balance"><EyeOff size={16} strokeWidth={2} /></TradeIcon>
        <TradeIcon aria-label="Expand"><ChevronUp size={14} strokeWidth={2.2} /></TradeIcon>
        <TradeIcon aria-label="Full screen"><Corners s={15} w={2.6} /></TradeIcon>
      </TradeBar>
      <Taskbar>
        <TaskCenter>
          <StartButton aria-label="Start"><svg width="16" height="16"><path d="M0 0h7.500v7.500H0zM8.500 0H16v7.500H8.500zM0 8.500h7.500V16H0zM8.500 8.500H16V16H8.500z" fill="#45b9ea" /></svg></StartButton>
          <TaskSearch><Search size={11} strokeWidth={2.3} /><TaskInput placeholder="Buscar" aria-label="Buscar" /></TaskSearch>
          <TaskApps>
            {art.map((a) => (
              <TaskApp key={a.name} aria-label={a.name} $on={a.on} $run={a.run}>
                <svg width="18" height="18" viewBox="0 0 20 20" fontFamily={uiFont}>{a.el}</svg>
                {a.badge && <Count>{a.badge}</Count>}
              </TaskApp>
            ))}
          </TaskApps>
        </TaskCenter>
        <Clock>18:50<br />17/12/2025</Clock>
      </Taskbar>
    </Page>
  );
}
